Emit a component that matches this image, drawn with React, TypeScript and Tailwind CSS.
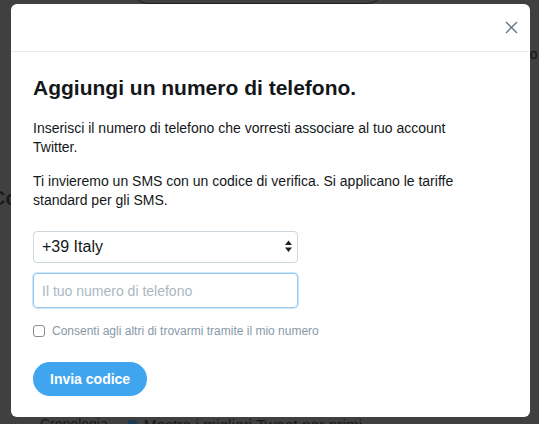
import { useState } from 'react';

const font = { fontFamily: '"Liberation Sans", Arial, sans-serif' };

const App = () => {
	const [country, setCountry] = useState('39');
	const [phone, setPhone] = useState('');
	const [discoverable, setDiscoverable] = useState(false);

	return (
		<div className="relative w-[539px] h-[424px] overflow-hidden bg-[#404040]" style={font}>
			{/* page behind the overlay */}
			<div className="absolute left-[131px] top-[-30px] w-[253px] h-[34px] rounded-full border border-[#1f1f1f]" />
			<div className="absolute left-[-9px] top-[183px] text-[20px] font-bold text-[#1a1a1a]">Co</div>
			<div className="absolute left-[522px] top-[44px] text-[14px] text-[#111]">no.</div>
			<div className="absolute left-[40px] top-[413px] flex items-center text-[14px] text-[#1a1a1a]">
				<span>Cronologia</span>
				<span className="ml-[20px] w-[9px] h-[9px] rounded-[2px] bg-[#1c3a52]" />
				<span className="ml-[7px] text-[15.5px]">Mostra i migliori Tweet per primi</span>
			</div>

			<div className="relative ml-[11px] mt-[4px] w-[519px] h-[413px] rounded-[6px] bg-white">
				<div className="flex justify-end items-center h-[48px] border-b border-[#e6ecf0] pr-[7px]">
					<button className="w-[24px] h-[24px] flex items-center justify-center">
						<svg width="13" height="13" viewBox="0 0 13 13">
							<path d="M1 1 L12 12 M12 1 L1 12" stroke="#657786" strokeWidth="1.4" fill="none" />
						</svg>
					</button>
				</div>

				<div className="pl-[22px] pr-[22px] pt-[24px]">
					<h1 className="text-[21px] leading-[24px] font-bold text-[#14171a]">Aggiungi un numero di telefono.</h1>
					<p className="mt-[19px] w-[440px] text-[14px] leading-[19px] text-[#14171a]">
						Inserisci il numero di telefono che vorresti associare al tuo account Twitter.
					</p>
					<p className="mt-[15px] w-[440px] text-[14px] leading-[19px] text-[#14171a]">
						Ti invieremo un SMS con un codice di verifica. Si applicano le tariffe standard per gli SMS.
					</p>

					<div className="relative mt-[21px] w-[265px]">
						<select
							value={country}
							onChange={(e) => setCountry(e.target.value)}
							className="appearance-none w-full h-[32px] pl-[8px] pr-[20px] rounded-[4px] border border-[#ccd6dd] bg-white text-[16px] text-[#14171a] outline-none"
							style={font}>
							<option value="39">+39 Italy</option>
							<option value="44">+44 United Kingdom</option>
							<option value="1">+1 United States</option>
						</select>
						<svg className="absolute right-[6px] top-[9px] pointer-events-none" width="7" height="13" viewBox="0 0 7 13">
							<path d="M3.5 0.5 L7 5 L0 5 Z M0 7.5 L7 7.5 L3.5 12 Z" fill="#222" />
						</svg>
					</div>

					<input
						type="tel"
						value={phone}
						onChange={(e) => setPhone(e.target.value)}
						placeholder="Il tuo numero di telefono"
						className="block mt-[10px] w-[265px] h-[35px] px-[8px] rounded-[4px] border border-[#94c8f3] shadow-[0_0_0_1px_#cfe6fa] text-[14px] text-[#14171a] placeholder:text-[#aab8c2] outline-none"
						style={font}
					/>

					<label className="flex items-center gap-[7px] mt-[16px] text-[12px] leading-[14px] text-[#8899a6]">
						<input
							type="checkbox"
							checked={discoverable}
							onChange={(e) => setDiscoverable(e.target.checked)}
							className="appearance-none w-[12px] h-[12px] rounded-[3px] border border-[#8d8d8d] bg-white"
						/>
						Consenti agli altri di trovarmi tramite il mio numero
					</label>

					<button className="mt-[24px] h-[34px] px-[17px] rounded-full bg-[#3fa5ef] text-white text-[14px] font-bold">
						Invia codice
					</button>
				</div>
			</div>
		</div>
	);
};

export default App;
